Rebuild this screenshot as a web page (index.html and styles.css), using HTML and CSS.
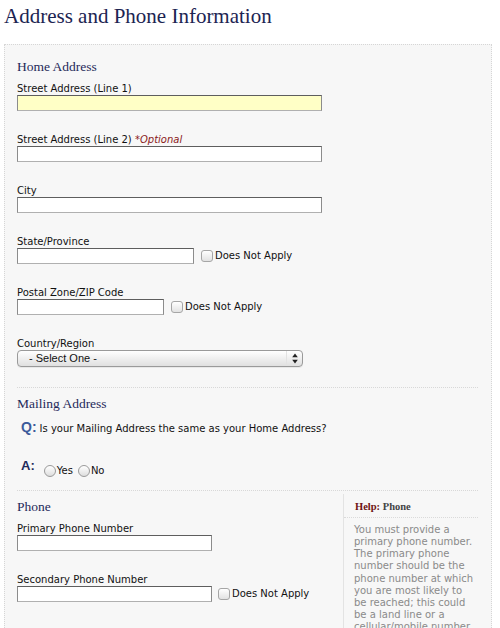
FILE: index.html
```html
<!DOCTYPE html>
<html lang="en">
<head>
<meta charset="utf-8">
<title>Address and Phone Information</title>
<link rel="stylesheet" href="styles.css">
</head>
<body>
<h1 class="title">Address and Phone Information</h1>
<div class="panel">
  <section class="section home">
    <h2 class="sec-title">Home Address</h2>
    <div class="field">
      <label class="lbl">Street Address (Line 1)</label>
      <div class="row"><input class="txt w-long focus" type="text"></div>
    </div>
    <div class="field">
      <label class="lbl">Street Address (Line 2) <em class="opt">*Optional</em></label>
      <div class="row"><input class="txt w-long" type="text"></div>
    </div>
    <div class="field">
      <label class="lbl">City</label>
      <div class="row"><input class="txt w-long" type="text"></div>
    </div>
    <div class="field">
      <label class="lbl">State/Province</label>
      <div class="row"><input class="txt w-state" type="text"><input class="chk" type="checkbox"><span class="chk-lbl">Does Not Apply</span></div>
    </div>
    <div class="field">
      <label class="lbl">Postal Zone/ZIP Code</label>
      <div class="row"><input class="txt w-zip" type="text"><input class="chk" type="checkbox"><span class="chk-lbl">Does Not Apply</span></div>
    </div>
    <div class="field">
      <label class="lbl">Country/Region</label>
      <div class="select">
        <span class="select-text">- Select One -</span>
        <span class="select-arrows"><svg width="6" height="11" viewBox="0 0 6 11"><path d="M3 0.5 L5.8 4.2 L0.2 4.2 Z" fill="#222"/><path d="M3 10.5 L5.8 6.8 L0.2 6.8 Z" fill="#222"/></svg></span>
      </div>
    </div>
  </section>

  <section class="section mailing">
    <h2 class="sec-title">Mailing Address</h2>
    <div class="q-row"><span class="q-mark">Q:</span><span class="q-text">Is your Mailing Address the same as your Home Address?</span></div>
    <div class="a-row">
      <span class="a-mark">A:</span>
      <div class="radios">
        <input class="rad" type="radio" name="same"><span class="rad-lbl">Yes</span>
        <input class="rad rad-2" type="radio" name="same"><span class="rad-lbl">No</span>
      </div>
    </div>
  </section>

  <section class="section phone">
    <div class="phone-main">
      <h2 class="sec-title">Phone</h2>
      <div class="field">
        <label class="lbl">Primary Phone Number</label>
        <div class="row"><input class="txt w-phone" type="text"></div>
      </div>
      <div class="field">
        <label class="lbl">Secondary Phone Number</label>
        <div class="row"><input class="txt w-phone" type="text"><input class="chk chk-phone" type="checkbox"><span class="chk-lbl">Does Not Apply</span></div>
      </div>
    </div>
    <aside class="help">
      <div class="help-head"><span class="help-key">Help:</span> Phone</div>
      <p class="help-text">You must provide a primary phone number. The primary phone number should be the phone number at which you are most likely to be reached; this could be a land line or a cellular/mobile number.</p>
    </aside>
  </section>
</div>
</body>
</html>
```

FILE: styles.css
```css
html, body {
  margin: 0;
  padding: 0;
  background: #ffffff;
}

body {
  font-family: "DejaVu Sans", Verdana, sans-serif;
  font-size: 10px;
  color: #111111;
  overflow: hidden;
}

.title {
  margin: 4px 0 0 4px;
  font-family: "Liberation Serif", "Times New Roman", serif;
  font-weight: normal;
  font-size: 21px;
  line-height: 24px;
  color: #1c2452;
}

.panel {
  margin: 16px 0 0 4px;
  width: 488px;
  box-sizing: border-box;
  background: #f7f7f7;
  border: 1px dotted #d6d6d6;
  padding: 0 13px 0 12px;
  min-height: 700px;
}

.section {
  border-bottom: 1px dotted #d8d8d8;
}

.home {
  padding-top: 14px;
  padding-bottom: 20px;
}

.sec-title {
  margin: 0 0 8px 0;
  font-family: "Liberation Serif", "Times New Roman", serif;
  font-weight: normal;
  font-size: 13.5px;
  line-height: 16px;
  color: #1f2a5a;
}

.field {
  margin-bottom: 23px;
}

.field:last-child {
  margin-bottom: 0;
}

.lbl {
  display: block;
  height: 12px;
  line-height: 12px;
  white-space: nowrap;
}

.opt {
  font-style: italic;
  color: #8b1a1a;
}

.row {
  display: flex;
  align-items: center;
  height: 16px;
}

.txt {
  box-sizing: border-box;
  height: 16px;
  margin: 0;
  padding: 0 2px;
  border: 1px solid #8c8c8c;
  border-top-color: #5e5e5e;
  border-bottom-color: #b0b0b0;
  background: #ffffff;
  font: 10px "DejaVu Sans", sans-serif;
}

.focus {
  background: #ffffc6;
}

.w-long { width: 305px; }
.w-state { width: 177px; }
.w-zip { width: 147px; }
.w-phone { width: 195px; }

.chk {
  appearance: none;
  -webkit-appearance: none;
  box-sizing: border-box;
  width: 12px;
  height: 12px;
  margin: 0 0 0 7px;
  border: 1px solid #a6a6a6;
  border-radius: 3px;
  background: linear-gradient(#ffffff, #e2e2e2);
}

.chk-phone {
  margin-left: 6px;
}

.chk-lbl {
  margin-left: 2px;
  line-height: 12px;
  white-space: nowrap;
}

.select {
  box-sizing: border-box;
  width: 286px;
  height: 17px;
  display: flex;
  align-items: center;
  justify-content: space-between;
  border: 1px solid #9a9a9a;
  border-radius: 4px;
  background: linear-gradient(#ffffff, #ececec 60%, #e0e0e0);
  box-shadow: 0 1px 0 rgba(0,0,0,0.06);
}

.select-text {
  padding-left: 11px;
  font-family: "Liberation Sans", Arial, sans-serif;
  font-size: 11px;
  line-height: 15px;
  color: #111;
}

.select-arrows {
  display: flex;
  align-items: center;
  justify-content: center;
  width: 15px;
  height: 15px;
  border-left: 1px solid #e2e2e2;
}

.mailing {
  padding-top: 8px;
  padding-bottom: 13px;
}

.mailing .sec-title {
  margin-bottom: 7px;
}

.q-row {
  display: flex;
  align-items: baseline;
  padding-left: 4px;
  height: 16px;
}

.q-mark {
  font-family: "Liberation Sans", Arial, sans-serif;
  font-weight: bold;
  font-size: 14px;
  line-height: 16px;
  color: #3b5b9b;
}

.q-text {
  margin-left: 3px;
  line-height: 12px;
}

.a-row {
  display: flex;
  align-items: flex-start;
  padding-left: 4px;
  margin-top: 24px;
  height: 18px;
}

.a-mark {
  font-family: "Liberation Sans", Arial, sans-serif;
  font-weight: bold;
  font-size: 13px;
  line-height: 14px;
  color: #1f2a5a;
}

.radios {
  display: flex;
  align-items: center;
  margin: 6px 0 0 9px;
}

.rad {
  appearance: none;
  -webkit-appearance: none;
  box-sizing: border-box;
  width: 12px;
  height: 12px;
  margin: 0;
  border: 1px solid #9a9a9a;
  border-radius: 50%;
  background: linear-gradient(#ffffff, #dedede);
}

.rad-2 {
  margin-left: 5px;
}

.rad-lbl {
  margin-left: 1px;
  line-height: 12px;
}

.phone {
  display: flex;
  border-bottom: none;
}

.phone-main {
  width: 326px;
  padding-top: 8px;
}

.help {
  width: 135px;
  box-sizing: border-box;
  margin-top: 3px;
  border-left: 1px solid #e3e3e3;
  min-height: 200px;
}

.help-head {
  padding: 6px 0 3px 11px;
  font-family: "Liberation Serif", "Times New Roman", serif;
  font-weight: bold;
  font-size: 10.5px;
  line-height: 14px;
  color: #444;
  border-bottom: 1px dotted #dadada;
}

.help-key {
  color: #6e1212;
}

.help-text {
  margin: 0;
  padding: 6px 3px 0 10px;
  width: 121px;
  box-sizing: content-box;
  line-height: 12.15px;
  color: #8a8a8a;
}
```
